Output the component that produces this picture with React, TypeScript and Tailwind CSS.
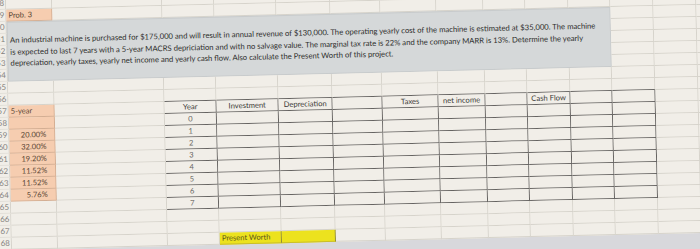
import React from "react";

const W = [
  "w-[26px]",
  "w-[46px]",
  "w-[110px]",
  "w-[52px]",
  "w-[62px]",
  "w-[54px]",
  "w-[50px]",
  "w-[56px]",
  "w-[47px]",
  "w-[42px]",
  "w-[43px]",
  "w-[42px]",
  "w-[43px]",
  "w-[43px]",
  "w-[43px]",
];

type Spec = { text?: string; kind?: "orange" | "yellow"; align?: "l" | "c" | "r"; year?: boolean };

const pct = ["20.00%", "32.00%", "19.20%", "11.52%", "11.52%", "5.76%"];

const data: Record<number, Record<number, Spec>> = {
  49: { 1: { text: "Prob. 3", kind: "orange" } },
  57: {
    1: { text: "5-year", kind: "orange" },
    3: { text: "Year", align: "c" },
    4: { text: "Investment", align: "c" },
    5: { text: "Depreciation", align: "c" },
    7: { text: "Taxes", align: "c" },
    8: { text: "net income", align: "c" },
    10: { text: "Cash Flow", align: "c" },
  },
  58: { 1: { kind: "orange" }, 3: { text: "0", align: "c", year: true } },
  65: { 3: { text: "7", align: "c", year: true } },
  68: { 4: { text: "Present Worth", kind: "yellow" }, 5: { kind: "yellow" } },
};
pct.forEach((p, k) => {
  data[59 + k] = { 1: { text: p, kind: "orange", align: "r" }, 3: { text: String(k + 1), align: "c", year: true } };
});

function Cell({ row, col }: { row: number; col: number }) {
  const s: Spec = (data[row] && data[row][col]) || {};
  const darkB = row >= 56 && row <= 65 && col >= 3 && col <= 12;
  const darkR = row >= 57 && row <= 65 && col >= 3 && col <= 12;
  let bg = "bg-[#f1eee8]";
  let bb = darkB ? "border-b-[#666462]" : "border-b-[#d6d3cb]";
  let br = darkR ? "border-r-[#666462]" : "border-r-[#d6d3cb]";
  let color = "text-[#3b3a37]";
  if (s.kind === "orange") {
    bg = "bg-[#f6cdb0]";
    bb = "border-b-[#d3ae93]";
    br = "border-r-[#d3ae93]";
    color = "text-[#5a4634]";
  } else if (s.kind === "yellow") {
    bg = "bg-[#ece21e]";
    bb = "border-b-[#c9be2a]";
    br = "border-r-[#8f8a3a]";
    color = "text-[#5b5418]";
  }
  if (s.year) color = "text-[#6a6864]";
  const align = s.align === "c" ? "text-center" : s.align === "r" ? "text-right pr-[8px]" : "text-left pl-[2px]";
  return (
    <div
      className={`${W[col]} ${bg} ${bb} ${br} ${color} ${align} h-[12px] shrink-0 border-r border-b overflow-hidden whitespace-nowrap text-[7.6px] leading-[11px]`}
    >
      {s.text}
    </div>
  );
}

function RowNum({ n }: { n: number }) {
  return (
    <div className="w-[26px] h-[12px] shrink-0 bg-[#f1eee8] border-r border-b border-r-[#d6d3cb] border-b-[#e2dfd8] text-right pr-[1px] text-[8px] leading-[11px] text-[#85837f]">
      {n}
    </div>
  );
}

function Row({ n }: { n: number }) {
  const cols = Array.from({ length: 14 }, (_, k) => k + 1);
  return (
    <div className="flex">
      <RowNum n={n} />
      {cols.map((c) => (
        <Cell key={c} row={n} col={c} />
      ))}
    </div>
  );
}

const lines = [
  "An industrial machine is purchased for $175,000 and will result in annual revenue of $130,000. The operating yearly cost of the machine is estimated at $35,000. The machine",
  "is expected to last 7 years with a 5-year MACRS depriciation and with no salvage value. The marginal tax rate is 22% and the company MARR is 13%. Determine the yearly",
  "depreciation, yearly taxes, yearly net income and yearly cash flow. Also calculate the Present Worth of this project.",
];

function BoxBlock() {
  const rows = [50, 51, 52, 53, 54];
  return (
    <div className="flex">
      <div className="flex flex-col">
        {rows.map((n) => (
          <RowNum key={n} n={n} />
        ))}
      </div>
      <div className="w-[604px] h-[60px] shrink-0 bg-[#d5d8d9] border border-[#c8cbcc] pt-[12px] pl-[2px] text-[#2e2e2c] text-[7.7px] leading-[11.6px]">
        {lines.map((l, k) => (
          <div key={k} className="whitespace-nowrap">
            {l}
          </div>
        ))}
      </div>
      <div className="flex flex-col">
        {rows.map((n) => (
          <div key={n} className="flex">
            {[12, 13, 14].map((c) => (
              <Cell key={c} row={n} col={c} />
            ))}
          </div>
        ))}
      </div>
    </div>
  );
}

export default function App() {
  const top = [47, 48, 49];
  const rest = Array.from({ length: 14 }, (_, k) => 55 + k);
  return (
    <div className="w-[700px] h-[249px] overflow-hidden bg-[#f1eee8] [font-family:Lato,'Liberation_Sans',sans-serif]">
      <div className="ml-[-20px] mt-[-14px] w-[759px] origin-[20px_14px] rotate-[-1.4deg]">
        {top.map((n) => (
          <Row key={n} n={n} />
        ))}
        <BoxBlock />
        {rest.map((n) => (
          <Row key={n} n={n} />
        ))}
        <div className="h-[40px] bg-[#d8d8dc]" />
      </div>
    </div>
  );
}
